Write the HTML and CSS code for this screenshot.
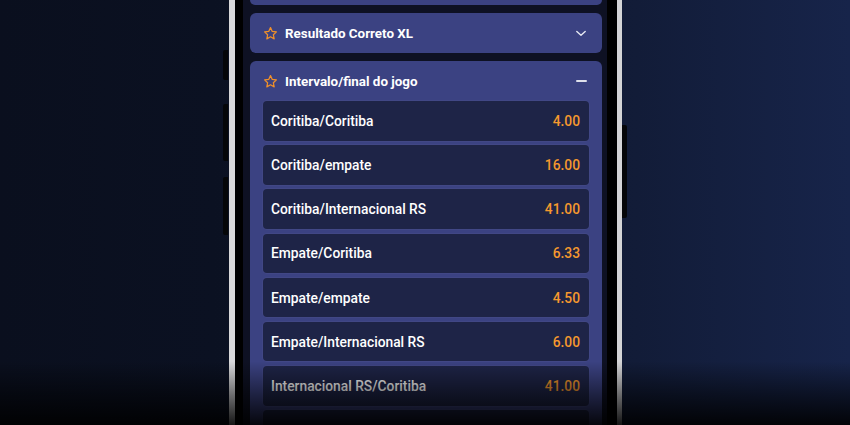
FILE: index.html
```html
<!DOCTYPE html>
<html lang="pt">
<head>
<meta charset="utf-8">
<title>Intervalo/final do jogo</title>
<link rel="stylesheet" href="styles.css">
</head>
<body>
<div class="phone">
  <span class="btn btn-a"></span>
  <span class="btn btn-b"></span>
  <span class="btn btn-c"></span>
  <span class="btn btn-r"></span>
  <div class="screen">
    <div class="panel stub"></div>
    <div class="panel">
      <div class="panel-head">
        <svg class="star" viewBox="0 0 24 24" width="15" height="15"><path d="M12 2.6l2.85 6.05 6.6.8-4.85 4.55 1.25 6.55L12 17.3l-5.85 3.25 1.25-6.55L2.55 9.45l6.6-.8z" fill="none" stroke="#f0902a" stroke-width="2" stroke-linejoin="round"/></svg>
        <span class="title">Resultado Correto XL</span>
        <svg class="chev" viewBox="0 0 12 8" width="10" height="7"><path d="M1 1.5l5 4.5 5-4.5" fill="none" stroke="#e6e8f2" stroke-width="1.7" stroke-linecap="round" stroke-linejoin="round"/></svg>
      </div>
    </div>
    <div class="panel">
      <div class="panel-head">
        <svg class="star" viewBox="0 0 24 24" width="15" height="15"><path d="M12 2.6l2.85 6.05 6.6.8-4.85 4.55 1.25 6.55L12 17.3l-5.85 3.25 1.25-6.55L2.55 9.45l6.6-.8z" fill="none" stroke="#f0902a" stroke-width="2" stroke-linejoin="round"/></svg>
        <span class="title">Intervalo/final do jogo</span>
        <span class="minus"></span>
      </div>
      <div class="rows">
        <div class="row"><span class="label">Coritiba/Coritiba</span><span class="odd">4.00</span></div>
        <div class="row"><span class="label">Coritiba/empate</span><span class="odd">16.00</span></div>
        <div class="row"><span class="label">Coritiba/Internacional RS</span><span class="odd">41.00</span></div>
        <div class="row"><span class="label">Empate/Coritiba</span><span class="odd">6.33</span></div>
        <div class="row"><span class="label">Empate/empate</span><span class="odd">4.50</span></div>
        <div class="row"><span class="label">Empate/Internacional RS</span><span class="odd">6.00</span></div>
        <div class="row"><span class="label">Internacional RS/Coritiba</span><span class="odd">41.00</span></div>
        <div class="row"></div>
      </div>
    </div>
  </div>
</div>
</body>
</html>
```
FILE: styles.css
```css
html, body {
  margin: 0;
  padding: 0;
}
body {
  width: 850px;
  height: 425px;
  overflow: hidden;
  position: relative;
  font-family: Roboto, "Liberation Sans", Arial, sans-serif;
  background: linear-gradient(to right, #0a0f1e 0%, #0b1122 25%, #0e1529 45%, #121c38 75%, #17244a 100%);
}
body::after {
  content: "";
  position: absolute;
  left: 0;
  top: 0;
  right: 0;
  bottom: 0;
  background: linear-gradient(to bottom, rgba(0,0,0,0) 0%, rgba(0,0,0,0) 85%, rgba(0,0,0,0.5) 93%, rgba(0,0,0,0.9) 100%);
  pointer-events: none;
}
.phone {
  position: relative;
  margin-left: 229px;
  width: 364px;
  height: 425px;
  padding: 0 10px 0 8px;
  background: #000;
  border-left: 6px solid #d9d9db;
  border-right: 5px solid #d4d4d6;
}
.btn {
  position: absolute;
  background: #050608;
  width: 5px;
  border-radius: 2px 0 0 2px;
}
.btn-a { left: -12px; top: 50px; height: 30px; }
.btn-b { left: -12px; top: 104px; height: 57px; }
.btn-c { left: -12px; top: 177px; height: 58px; }
.btn-r { right: -10px; top: 125px; height: 93px; width: 5px; border-radius: 0 2px 2px 0; }
.screen {
  height: 100%;
  background: #0e1123;
  padding: 0 5px 0 7px;
  display: flex;
  flex-direction: column;
  gap: 8px;
  overflow: hidden;
}
.panel {
  background: #3b4282;
  border-radius: 6px;
  flex: none;
}
.panel.stub {
  height: 5px;
  border-radius: 0 0 6px 6px;
}
.panel-head {
  height: 40px;
  display: flex;
  align-items: center;
  padding: 0 15px 0 13px;
  gap: 7px;
}
.star {
  display: block;
  flex: none;
}
.title {
  flex: 1;
  color: #ffffff;
  font-weight: 700;
  font-size: 13.4px;
}
.chev {
  display: block;
  margin-right: 1px;
}
.minus {
  width: 11px;
  height: 2px;
  background: #dfe1ec;
  border-radius: 1px;
}
.rows {
  display: flex;
  flex-direction: column;
  gap: 4.7px;
  padding: 0 13px;
}
.row {
  height: 39.5px;
  box-sizing: border-box;
  background: #1e2447;
  border-radius: 4px;
  display: flex;
  align-items: center;
  justify-content: space-between;
  padding: 0 9px 0 8px;
  box-shadow: 0 0 0 1px rgba(255,255,255,0.03);
}
.label {
  color: #ffffff;
  font-size: 13.8px;
  font-weight: 500;
}
.odd {
  color: #f5982e;
  font-size: 13.8px;
  font-weight: 500;
}
```
